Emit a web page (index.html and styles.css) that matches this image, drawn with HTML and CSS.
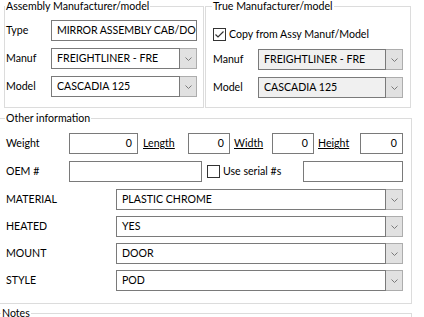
FILE: index.html
```html
<!DOCTYPE html>
<html lang="en">
<head>
    <meta charset="UTF-8">
    <meta name="viewport" content="width=device-width, initial-scale=1.0">
    <title>Part details</title>
    <link rel="stylesheet" href="styles.css">
</head>
<body>
    <div class="top">
        <fieldset class="grp grp-assy">
            <legend>Assembly Manufacturer/model</legend>
            <div class="rows rows-top">
                <div class="row">
                    <span class="lbl lbl-top">Type</span>
                    <div class="box field">MIRROR ASSEMBLY CAB/DO</div>
                </div>
                <div class="row">
                    <span class="lbl lbl-top">Manuf</span>
                    <div class="combo">
                        <div class="box val">FREIGHTLINER - FRE</div>
                        <div class="drop"><svg width="7" height="4" viewBox="0 0 7 4"><polyline points="0.5,0.5 3.5,3.5 6.5,0.5"/></svg></div>
                    </div>
                </div>
                <div class="row">
                    <span class="lbl lbl-top">Model</span>
                    <div class="combo">
                        <div class="box val">CASCADIA 125</div>
                        <div class="drop"><svg width="7" height="4" viewBox="0 0 7 4"><polyline points="0.5,0.5 3.5,3.5 6.5,0.5"/></svg></div>
                    </div>
                </div>
            </div>
        </fieldset>

        <fieldset class="grp grp-true">
            <legend>True Manufacturer/model</legend>
            <label class="check-row">
                <span class="check"><svg width="11" height="11" viewBox="0 0 11 11"><polyline points="1.5,5.5 4,8 9.5,2.5"/></svg></span>
                Copy from Assy Manuf/Model
            </label>
            <div class="rows rows-true">
                <div class="row">
                    <span class="lbl lbl-top">Manuf</span>
                    <div class="combo locked">
                        <div class="box val">FREIGHTLINER - FRE</div>
                        <div class="drop"><svg width="7" height="4" viewBox="0 0 7 4"><polyline points="0.5,0.5 3.5,3.5 6.5,0.5"/></svg></div>
                    </div>
                </div>
                <div class="row">
                    <span class="lbl lbl-top">Model</span>
                    <div class="combo locked">
                        <div class="box val">CASCADIA 125</div>
                        <div class="drop"><svg width="7" height="4" viewBox="0 0 7 4"><polyline points="0.5,0.5 3.5,3.5 6.5,0.5"/></svg></div>
                    </div>
                </div>
            </div>
        </fieldset>
    </div>

    <fieldset class="grp grp-other">
        <legend>Other information</legend>
        <div class="rows">
            <div class="row">
                <span class="lbl lbl-other">Weight</span>
                <div class="box num w-weight">0</div>
                <a class="dim dim-length">Length</a>
                <div class="box num w-length">0</div>
                <a class="dim dim-width">Width</a>
                <div class="box num w-width">0</div>
                <a class="dim dim-height">Height</a>
                <div class="box num w-height">0</div>
            </div>
            <div class="row">
                <span class="lbl lbl-other">OEM #</span>
                <div class="box w-oem"></div>
                <label class="serial">
                    <span class="check"></span>
                    Use serial #s
                </label>
                <div class="box w-serial"></div>
            </div>
            <div class="combos">
                <div class="row">
                    <span class="lbl lbl-attr">MATERIAL</span>
                    <div class="combo">
                        <div class="box val">PLASTIC CHROME</div>
                        <div class="drop"><svg width="7" height="4" viewBox="0 0 7 4"><polyline points="0.5,0.5 3.5,3.5 6.5,0.5"/></svg></div>
                    </div>
                </div>
                <div class="row">
                    <span class="lbl lbl-attr">HEATED</span>
                    <div class="combo">
                        <div class="box val">YES</div>
                        <div class="drop"><svg width="7" height="4" viewBox="0 0 7 4"><polyline points="0.5,0.5 3.5,3.5 6.5,0.5"/></svg></div>
                    </div>
                </div>
                <div class="row">
                    <span class="lbl lbl-attr">MOUNT</span>
                    <div class="combo">
                        <div class="box val">DOOR</div>
                        <div class="drop"><svg width="7" height="4" viewBox="0 0 7 4"><polyline points="0.5,0.5 3.5,3.5 6.5,0.5"/></svg></div>
                    </div>
                </div>
                <div class="row">
                    <span class="lbl lbl-attr">STYLE</span>
                    <div class="combo">
                        <div class="box val">POD</div>
                        <div class="drop"><svg width="7" height="4" viewBox="0 0 7 4"><polyline points="0.5,0.5 3.5,3.5 6.5,0.5"/></svg></div>
                    </div>
                </div>
            </div>
        </div>
    </fieldset>

    <fieldset class="grp grp-notes">
        <legend>Notes</legend>
    </fieldset>
</body>
</html>
```

FILE: styles.css
```css
* {
    box-sizing: border-box;
}
body {
    margin: 0;
    font-family: Lato, "Liberation Sans", sans-serif;
    font-size: 10.6px;
    line-height: 13px;
    color: #000;
    background: #fff;
    overflow: hidden;
}
.top {
    display: flex;
    gap: 1px;
    padding-left: 4px;
}
.grp {
    margin: 0;
    min-width: 0;
    border: 1px solid #dcdcdc;
}
.grp legend {
    padding: 0 1px;
    margin-left: -1px;
    line-height: 13px;
}
.grp-assy {
    width: 200px;
    padding: 7px 6px 10px 1px;
}
.grp-true {
    width: 206px;
    padding: 14px 7px 9px 7px;
}
.grp-other {
    width: 413px;
    margin: 4px 0 0 -1px;
    padding: 8px 8px 12px 6px;
}
.grp-notes {
    width: 413px;
    height: 60px;
    margin: 3px 0 0 -1px;
    padding: 0 0 0 2px;
}
.rows {
    display: flex;
    flex-direction: column;
    gap: 7px;
}
.rows-true {
    margin-top: 8px;
}
.combos {
    display: flex;
    flex-direction: column;
    gap: 6px;
}
.row {
    display: flex;
    align-items: center;
    height: 21px;
}
.lbl {
    flex: none;
}
.lbl-top {
    width: 45px;
}
.lbl-other {
    width: 63px;
}
.lbl-attr {
    width: 110px;
}
.box {
    height: 21px;
    border: 1px solid #7a7a7a;
    background: #fff;
    padding: 0 5px;
    display: flex;
    align-items: center;
    white-space: nowrap;
    overflow: hidden;
    flex: none;
}
.field {
    flex: 1;
    padding: 0 0 0 5px;
    letter-spacing: -0.1px;
}
.combo {
    flex: 1;
    display: flex;
    height: 21px;
}
.combo .val {
    flex: 1;
}
.combo.locked .val {
    background: #f0f0f0;
}
.drop {
    width: 17px;
    height: 21px;
    border: 1px solid #adadad;
    border-left: none;
    background: #e1e1e1;
    display: flex;
    align-items: center;
    justify-content: center;
}
.drop svg polyline {
    fill: none;
    stroke: #7a7a7a;
    stroke-width: 1;
}
.num {
    justify-content: flex-end;
}
.w-weight { width: 69px; }
.w-length { width: 42px; }
.w-width { width: 42px; }
.w-height { width: 43px; }
.w-oem { width: 133px; }
.w-serial {
    width: 100px;
    margin-left: auto;
}
.dim {
    text-decoration: underline;
    flex: none;
}
.dim-length {
    width: 45px;
    margin-left: 5px;
}
.dim-width {
    width: 38px;
    margin-left: 4px;
}
.dim-height {
    width: 42px;
    margin-left: 4px;
}
.check-row,
.serial {
    display: flex;
    align-items: center;
    gap: 3px;
    height: 14px;
}
.serial {
    margin-left: 5px;
}
.check {
    width: 13px;
    height: 13px;
    border: 1px solid #333;
    background: #fff;
    display: flex;
    align-items: center;
    justify-content: center;
    flex: none;
}
.check svg polyline {
    fill: none;
    stroke: #333;
    stroke-width: 1.2;
}
```
